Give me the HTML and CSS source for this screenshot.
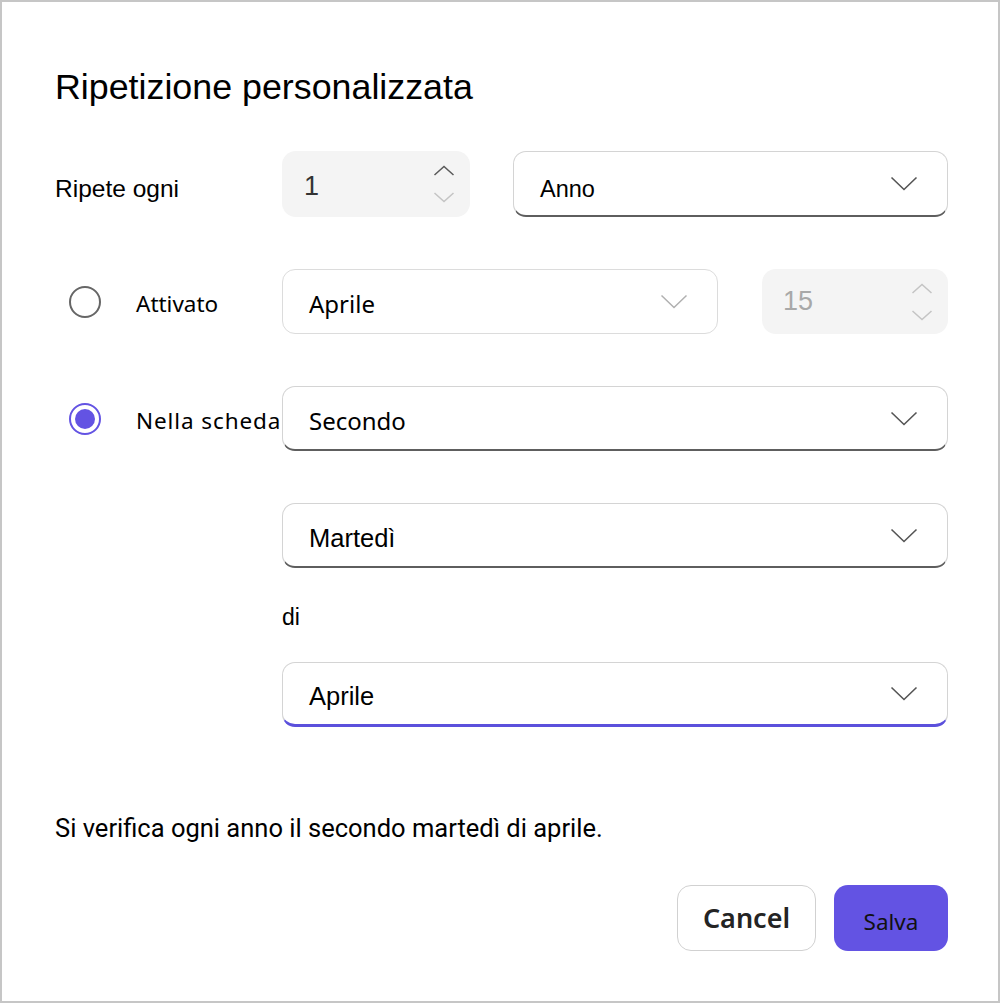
FILE: index.html
```html
<!DOCTYPE html>
<html lang="it">
<head>
<meta charset="utf-8">
<title>Ripetizione personalizzata</title>
<link rel="stylesheet" href="styles.css">
</head>
<body>
<div class="frame">
  <div class="dialog">
    <h1 class="title">Ripetizione personalizzata</h1>

    <div class="row row-first">
      <div class="label-col"><span class="label">Ripete ogni</span></div>
      <div class="ctrl-col split">
        <div class="spin spin-a">
          <span class="spin-value">1</span>
          <span class="spin-arrows">
            <svg class="arrow" width="22" height="11" viewBox="0 0 22 11"><path d="M1.5 10 L11 1.5 L20.5 10" fill="none" stroke="#5a5a5a" stroke-width="1.5"/></svg>
            <svg class="arrow" width="22" height="11" viewBox="0 0 22 11"><path d="M1.5 1 L11 9.5 L20.5 1" fill="none" stroke="#c4c4c4" stroke-width="1.5"/></svg>
          </span>
        </div>
        <div class="select select-dark grow">
          <span class="sel-text arial">Anno</span>
          <svg class="chev" width="28" height="15" viewBox="0 0 28 15"><path d="M1.5 1.5 L14 13.5 L26.5 1.5" fill="none" stroke="#555" stroke-width="1.6"/></svg>
        </div>
      </div>
    </div>

    <div class="row row-gap">
      <div class="label-col radio-col">
        <span class="radio"></span>
        <span class="radio-label">Attivato</span>
      </div>
      <div class="ctrl-col split split-b">
        <div class="select select-light sel-b">
          <span class="sel-text segoe">Aprile</span>
          <svg class="chev" width="28" height="15" viewBox="0 0 28 15"><path d="M1.5 1.5 L14 13.5 L26.5 1.5" fill="none" stroke="#b0b0b0" stroke-width="1.5"/></svg>
        </div>
        <div class="spin spin-b">
          <span class="spin-value disabled">15</span>
          <span class="spin-arrows">
            <svg class="arrow" width="22" height="11" viewBox="0 0 22 11"><path d="M1.5 10 L11 1.5 L20.5 10" fill="none" stroke="#c4c4c4" stroke-width="1.5"/></svg>
            <svg class="arrow" width="22" height="11" viewBox="0 0 22 11"><path d="M1.5 1 L11 9.5 L20.5 1" fill="none" stroke="#c4c4c4" stroke-width="1.5"/></svg>
          </span>
        </div>
      </div>
    </div>

    <div class="row row-gap">
      <div class="label-col radio-col">
        <span class="radio checked"></span>
        <span class="radio-label wide">Nella scheda</span>
      </div>
      <div class="ctrl-col">
        <div class="select select-dark">
          <span class="sel-text segoe">Secondo</span>
          <svg class="chev" width="28" height="15" viewBox="0 0 28 15"><path d="M1.5 1.5 L14 13.5 L26.5 1.5" fill="none" stroke="#555" stroke-width="1.6"/></svg>
        </div>
      </div>
    </div>

    <div class="row row-gap">
      <div class="label-col"></div>
      <div class="ctrl-col">
        <div class="select select-dark">
          <span class="sel-text arial big">Martedì</span>
          <svg class="chev" width="28" height="15" viewBox="0 0 28 15"><path d="M1.5 1.5 L14 13.5 L26.5 1.5" fill="none" stroke="#555" stroke-width="1.6"/></svg>
        </div>
      </div>
    </div>

    <div class="row row-di">
      <div class="label-col"></div>
      <div class="ctrl-col"><span class="di">di</span></div>
    </div>

    <div class="row row-last">
      <div class="label-col"></div>
      <div class="ctrl-col">
        <div class="select select-focus">
          <span class="sel-text arial big">Aprile</span>
          <svg class="chev" width="28" height="15" viewBox="0 0 28 15"><path d="M1.5 1.5 L14 13.5 L26.5 1.5" fill="none" stroke="#555" stroke-width="1.6"/></svg>
        </div>
      </div>
    </div>

    <p class="summary">Si verifica ogni anno il secondo martedì di aprile.</p>

    <div class="actions">
      <button class="btn btn-cancel">Cancel</button>
      <button class="btn btn-save">Salva</button>
    </div>
  </div>
</div>
</body>
</html>
```

FILE: styles.css
```css
* { box-sizing: border-box; }
html, body { margin: 0; padding: 0; background: #fff; }

.frame {
  width: 1000px;
  height: 1003px;
  border: 2px solid #c6c6c6;
  background: #fff;
  overflow: hidden;
}

.dialog {
  padding: 64px 50px 0 53px;
  font-family: "Liberation Sans", Arial, sans-serif;
  color: #000;
}

.title {
  margin: 0;
  font-family: "Liberation Sans", Arial, sans-serif;
  font-weight: 400;
  font-size: 35.8px;
  line-height: 42px;
}

.row {
  display: grid;
  grid-template-columns: 227px 1fr;
  align-items: center;
}
.row-first { margin-top: 43px; }
.row-gap { margin-top: 52px; }
.row-di { margin-top: 34px; height: 30px; }
.row-last { margin-top: 30px; }

.label-col { display: flex; align-items: center; }
.label { font-size: 24.5px; margin-top: 10px; }

.radio-col { padding-left: 14px; }
.radio {
  width: 32px;
  height: 32px;
  border-radius: 50%;
  border: 2px solid #666;
  flex: none;
  display: flex;
  align-items: center;
  justify-content: center;
}
.radio.checked { border-color: #6353e3; }
.radio.checked::after {
  content: "";
  width: 20px;
  height: 20px;
  border-radius: 50%;
  background: #6353e3;
}
.radio-label {
  margin-left: 35px;
  font-family: "Noto Sans", "Open Sans", sans-serif;
  font-size: 22.5px;
  white-space: nowrap;
  margin-top: 4px;
}
.radio-label.wide { letter-spacing: 0.9px; }

.split { display: flex; gap: 43px; }
.split-b { gap: 44px; }
.grow { flex: 1; }

.spin {
  height: 66px;
  background: #f4f4f4;
  border-radius: 14px;
  display: flex;
  align-items: center;
  justify-content: space-between;
  padding: 0 15px 0 22px;
}
.spin-a { width: 188px; }
.spin-b { width: 186px; height: 65px; padding-left: 21px; }
.spin-value {
  font-size: 27px;
  color: #333;
  margin-top: 5px;
}
.spin-b .spin-value { margin-top: 0; }
.spin-value.disabled { color: #a8a8a8; }
.spin-arrows {
  display: flex;
  flex-direction: column;
  gap: 16px;
}
.arrow { display: block; }

.select {
  height: 65px;
  border-radius: 13px;
  background: #fff;
  border: 1px solid #d4d4d4;
  display: flex;
  align-items: center;
  justify-content: space-between;
  padding: 0 29px 0 26px;
}
.row-first .select { height: 66px; }
.select-dark { border-bottom: 2px solid #5e5e5e; }
.select-light { border: 1.5px solid #dcdcdc; }
.select-focus { border-bottom: 3px solid #5b50dc; }
.sel-b { width: 436px; }
.sel-text { font-size: 23.5px; margin-top: 12px; }
.sel-text.big { font-size: 25.5px; margin-top: 6px; }
.sel-text.segoe {
  font-family: "Noto Sans", "Open Sans", sans-serif;
  font-size: 24px;
  margin-top: 4px;
}
.chev { display: block; margin-top: 0; }

.di { font-size: 23px; }

.summary {
  margin: 86px 0 0;
  font-family: Roboto, "Liberation Sans", sans-serif;
  font-size: 25.5px;
  line-height: 30px;
}

.actions {
  margin-top: 42px;
  display: flex;
  justify-content: flex-end;
  gap: 18px;
}
.btn {
  height: 66px;
  border-radius: 14px;
  font-family: "Noto Sans", "Open Sans", sans-serif;
  cursor: pointer;
  padding: 0;
}
.btn-cancel {
  width: 139px;
  background: #fff;
  border: 1.5px solid #d1d1d1;
  color: #242424;
  font-weight: 600;
  font-size: 27px;
  padding-bottom: 2px;
}
.btn-save {
  width: 114px;
  background: #6353e3;
  border: none;
  color: #111;
  font-size: 22.5px;
  padding-top: 6px;
}
```
